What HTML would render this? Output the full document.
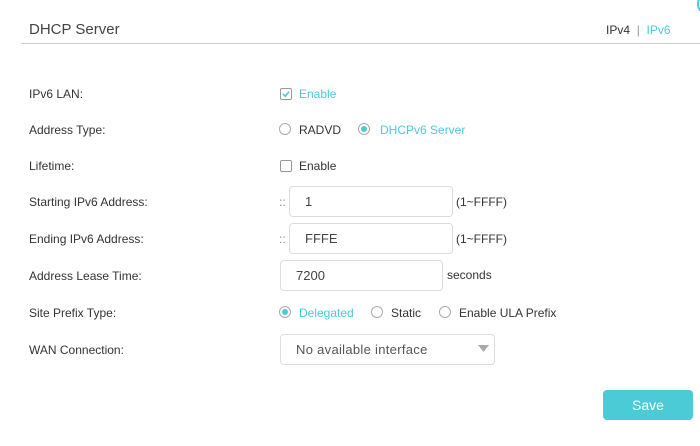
<!DOCTYPE html>
<html><head><style>
body{margin:0;width:700px;height:446px;background:#fff;font-family:"Liberation Sans",Arial,sans-serif;color:#333;position:relative;overflow:hidden;font-size:12px}
.a{position:absolute;white-space:nowrap}
.t{color:#4acbd6}
.cb{position:absolute;width:10px;height:10px;border:1px solid #999;border-radius:2px}
.rd{position:absolute;width:10px;height:10px;border:1px solid #aaa;border-radius:50%}
.rd.on::after{content:"";position:absolute;left:2px;top:2px;width:6px;height:6px;border-radius:50%;background:#4acbd6}
.in{position:absolute;border:1px solid #ddd;border-radius:4px;box-sizing:border-box;font-size:13px;color:#444;padding-left:15px;line-height:29px}
</style></head><body>
<div class="a" style="left:29px;top:21px;font-size:15px;color:#444">DHCP Server</div>
<div class="a" style="left:606px;top:23px">IPv4 <span style="color:#999">&nbsp;|&nbsp;</span> <span class="t">IPv6</span></div>
<div class="a" style="left:21px;top:43px;width:679px;height:1px;background:#ccc"></div>

<div class="a" style="left:29px;top:87px">IPv6 LAN:</div>
<div class="cb" style="left:280px;top:88px"><svg width="10" height="10" style="position:absolute;left:0;top:0"><path d="M2 5 L4.2 7.2 L8 2.8" stroke="#4acbd6" stroke-width="1.6" fill="none"/></svg></div>
<div class="a t" style="left:299px;top:87px">Enable</div>

<div class="a" style="left:29px;top:123px">Address Type:</div>
<div class="rd" style="left:279px;top:123px"></div>
<div class="a" style="left:299px;top:123px">RADVD</div>
<div class="rd on" style="left:358px;top:123px"></div>
<div class="a t" style="left:380px;top:123px">DHCPv6 Server</div>

<div class="a" style="left:29px;top:159px">Lifetime:</div>
<div class="cb" style="left:280px;top:160px"></div>
<div class="a" style="left:299px;top:159px">Enable</div>

<div class="a" style="left:29px;top:195px">Starting IPv6 Address:</div>
<div class="a" style="left:279px;top:195px;color:#888">::</div>
<div class="in" style="left:289px;top:186px;width:164px;height:31px">1</div>
<div class="a" style="left:456px;top:195px">(1~FFFF)</div>

<div class="a" style="left:29px;top:232px">Ending IPv6 Address:</div>
<div class="a" style="left:279px;top:232px;color:#888">::</div>
<div class="in" style="left:289px;top:223px;width:164px;height:31px">FFFE</div>
<div class="a" style="left:456px;top:232px">(1~FFFF)</div>

<div class="a" style="left:29px;top:269px">Address Lease Time:</div>
<div class="in" style="left:280px;top:260px;width:163px;height:31px">7200</div>
<div class="a" style="left:447px;top:268px">seconds</div>

<div class="a" style="left:29px;top:306px">Site Prefix Type:</div>
<div class="rd on" style="left:279px;top:306px"></div>
<div class="a t" style="left:299px;top:306px">Delegated</div>
<div class="rd" style="left:371px;top:306px"></div>
<div class="a" style="left:391px;top:306px">Static</div>
<div class="rd" style="left:439px;top:306px"></div>
<div class="a" style="left:459px;top:306px">Enable ULA Prefix</div>

<div class="a" style="left:29px;top:343px">WAN Connection:</div>
<div class="in" style="left:280px;top:334px;width:215px;height:31px;color:#555;letter-spacing:0.3px">No available interface</div>
<svg class="a" style="left:478px;top:345px" width="12" height="8"><path d="M0 0 H11 L5.5 7Z" fill="#aaa"/></svg>

<div class="a" style="left:603px;top:390px;width:90px;height:30px;background:#4acbd6;border-radius:4px;color:#fff;font-size:14px;text-align:center;line-height:30px">Save</div>
<div class="a" style="left:697px;top:-4px;width:6px;height:12px;border:2px solid #4acbd6;border-radius:50%"></div>
</body></html>
